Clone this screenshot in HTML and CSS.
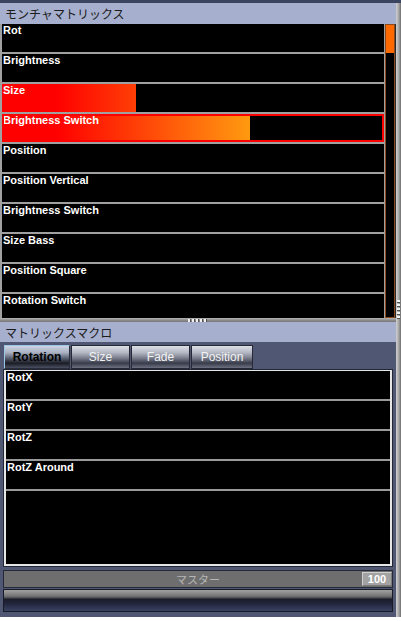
FILE: index.html
```html
<!DOCTYPE html>
<html lang="ja">
<head>
<meta charset="utf-8">
<link rel="stylesheet" href="styles.css">
</head>
<body>
<div class="window">
  <div class="topbar"></div>
  <div class="main">
    <div class="header"><span>モンチャマトリックス</span></div>
    <div class="listarea">
      <div class="list">
        <div class="row"><span class="label">Rot</span></div>
        <div class="row"><span class="label">Brightness</span></div>
        <div class="row"><div class="fill" style="width:134px"></div><span class="label">Size</span></div>
        <div class="row selected"><div class="fill" style="width:248px"></div><span class="label">Brightness Switch</span></div>
        <div class="row"><span class="label">Position</span></div>
        <div class="row"><span class="label">Position Vertical</span></div>
        <div class="row"><span class="label">Brightness Switch</span></div>
        <div class="row"><span class="label">Size Bass</span></div>
        <div class="row"><span class="label">Position Square</span></div>
        <div class="row"><span class="label">Rotation Switch</span></div>
      </div>
      <div class="scroll"><div class="thumb"></div></div>
      <div class="edge"></div>
    </div>
    <div class="splitter"><div class="grip-h"></div></div>
    <div class="header header2"><span>マトリックスマクロ</span></div>
    <div class="panel">
      <div class="tabs">
        <div class="tab active tab-rot">Rotation</div>
        <div class="tab tab-size">Size</div>
        <div class="tab tab-fade">Fade</div>
        <div class="tab tab-pos">Position</div>
      </div>
      <div class="content">
        <div class="inner">
          <div class="mrow"><span class="label">RotX</span></div>
          <div class="mrow"><span class="label">RotY</span></div>
          <div class="mrow"><span class="label">RotZ</span></div>
          <div class="mrow"><span class="label">RotZ Around</span></div>
        </div>
      </div>
      <div class="master">
        <span class="master-label">マスター</span>
        <span class="value">100</span>
      </div>
      <div class="slider"></div>
    </div>
  </div>
  <div class="rail"><div class="grip-v"></div></div>
</div>
</body>
</html>
```

FILE: styles.css
```css
* { box-sizing: border-box; margin: 0; padding: 0; }
html, body { background: #fff; }
body {
  margin: 0;
  width: 401px;
  height: 621px;
  overflow: hidden;
  font-family: "Liberation Sans", Arial, sans-serif;
}
.window {
  display: grid;
  grid-template-columns: 396px 5px;
  grid-template-rows: 3px 614px;
  width: 401px;
}
.topbar {
  grid-column: 1 / 3;
  background: #3c4560;
}
.main {
  display: flex;
  flex-direction: column;
  height: 614px;
}
.rail {
  position: relative;
  background: linear-gradient(90deg, #cfcfcf 0, #b4b4b4 40%, #8a8a8a 80%, #6c6c6c 100%);
}
.grip-v {
  position: absolute;
  left: 1px;
  top: 297px;
  width: 3px;
  height: 20px;
  background: repeating-linear-gradient(180deg, #f2f2f2 0, #f2f2f2 2px, #505050 2px, #505050 3px, transparent 3px, transparent 4px);
}
.header {
  height: 21px;
  flex: none;
  background: #a6afcd;
  padding: 2px 0 0 5px;
  font: 12px/18px "Noto Sans CJK JP", sans-serif;
  color: #1c1c1c;
}
.header2 { height: 20px; padding-top: 2px; }
.listarea {
  display: flex;
  height: 294px;
  flex: none;
}
.list {
  width: 385px;
  background: #a0a0a0;
  padding: 0 1px 0 2px;
  overflow: hidden;
  display: flex;
  flex-direction: column;
  gap: 2px;
}
.row {
  flex: none;
  height: 28px;
  background: #000;
  position: relative;
  padding: 0 0 0 1px;
  font-size: 11px;
  line-height: 13px;
}
.label {
  position: relative;
  z-index: 2;
  color: #fff;
  font-weight: bold;
  font-size: 11px;
  line-height: 13px;
  white-space: nowrap;
}
.fill {
  position: absolute;
  left: 0;
  top: 0;
  bottom: 0;
  overflow: hidden;
  z-index: 1;
}
.fill::before {
  content: "";
  position: absolute;
  left: 0;
  top: 0;
  bottom: 0;
  width: 382px;
  background: linear-gradient(90deg, #ff0000 0, #ff0000 55px, #ff9a10 248px);
}
.selected::after {
  content: "";
  position: absolute;
  inset: 0;
  border: 2px solid #ff0000;
  z-index: 3;
}
.scroll {
  width: 10px;
  border: 1px solid #8c4a1c;
  background: #000;
}
.thumb {
  height: 28px;
  background: #ff6a00;
}
.edge {
  width: 1px;
  background: #2a2a2a;
}
.splitter {
  height: 4px;
  flex: none;
  position: relative;
  background: linear-gradient(180deg, #b4b4b4, #8a8a8a 60%, #767676);
}
.grip-h {
  position: absolute;
  left: 188px;
  top: 1px;
  width: 20px;
  height: 3px;
  background: repeating-linear-gradient(90deg, #f0f0f0 0, #f0f0f0 2px, #505050 2px, #505050 3px, transparent 3px, transparent 4px);
}
.panel {
  flex: 1;
  background: #4f5772;
  padding: 3px 3px 5px 3px;
  display: flex;
  flex-direction: column;
}
.tabs {
  display: flex;
  gap: 1px;
  padding-left: 1px;
  height: 24px;
  flex: none;
}
.tab {
  height: 24px;
  border: 1px solid #262834;
  background: linear-gradient(180deg, #dcdfe6 0, #b4b8c4 30%, #7a7e8c 55%, #383c4a 78%, #6c7080 100%);
  color: #f2f2f2;
  font-size: 12px;
  line-height: 22px;
  text-align: center;
}
.tab.active {
  border-color: #9cc6e6 #2a2c38 #2a2c38 #9cc6e6;
  background: linear-gradient(180deg, #cdd4e2 0, #a8b0c2 30%, #5c6274 55%, #1a1c24 78%, #4a5062 100%);
  color: #000;
  font-weight: bold;
}
.tab-rot { width: 66px; }
.tab-size { width: 59px; }
.tab-fade { width: 59px; }
.tab-pos { width: 62px; }
.content {
  height: 198px;
  flex: none;
  border: 1px solid #23273a;
}
.inner {
  height: 100%;
  background: #000;
  border: 2px solid #e6e6e6;
  border-top-width: 1px;
}
.mrow {
  height: 30px;
  border-bottom: 2px solid #9a9a9a;
  padding: 0 0 0 1px;
  font-size: 11px;
  line-height: 13px;
}
.master {
  margin-top: 3px;
  height: 18px;
  flex: none;
  border: 1px solid #262a38;
  background: #6e6e6e;
  position: relative;
  display: flex;
  align-items: center;
  justify-content: center;
}
.master-label {
  font: 11px/14px "Noto Sans CJK JP", sans-serif;
  color: #b6b6b6;
}
.value {
  position: absolute;
  right: 0;
  top: 1px;
  width: 30px;
  height: 14px;
  border: 1px solid #d0d0d0;
  border-right-color: #7a7a7a;
  border-bottom-color: #7a7a7a;
  background: #a2a2a2;
  color: #fff;
  font-weight: bold;
  font-size: 11px;
  line-height: 12px;
  text-align: center;
}
.slider {
  margin-top: 1px;
  height: 23px;
  flex: none;
  border: 1px solid #181c26;
  background: linear-gradient(180deg, #a0a0a0 0, #8c8c8c 3px, #747474 6px, #4a4c54 8px, #1a1c26 9px, #20243a 13px, #3a4262 100%);
}
```
